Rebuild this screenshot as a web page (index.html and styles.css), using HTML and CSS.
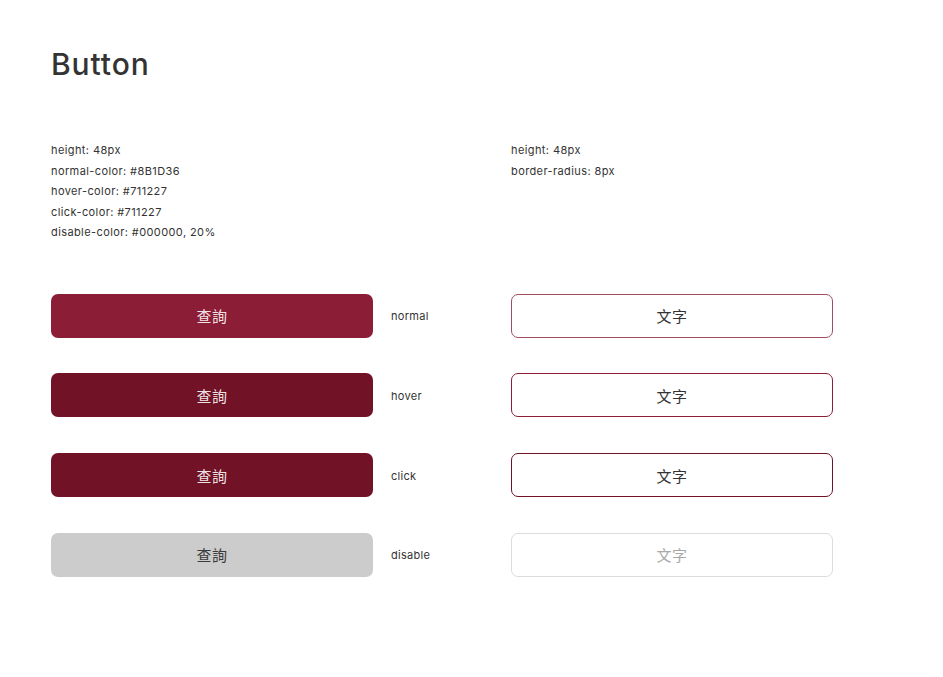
FILE: index.html
```html
<!DOCTYPE html>
<html lang="zh-Hant">
<head>
<meta charset="utf-8">
<title>Button</title>
<link rel="stylesheet" href="styles.css">
</head>
<body>
<main class="page">
  <h1 class="title">Button</h1>
  <div class="board">
    <ul class="spec spec-left">
      <li>height: 48px</li>
      <li>normal-color: #8B1D36</li>
      <li>hover-color: #711227</li>
      <li>click-color: #711227</li>
      <li>disable-color: #000000, 20%</li>
    </ul>
    <ul class="spec spec-right">
      <li>height: 48px</li>
      <li>border-radius: 8px</li>
    </ul>

    <button class="btn btn-fill is-normal">查詢</button>
    <span class="state">normal</span>
    <button class="btn btn-line is-normal">文字</button>

    <button class="btn btn-fill is-hover">查詢</button>
    <span class="state">hover</span>
    <button class="btn btn-line is-hover">文字</button>

    <button class="btn btn-fill is-click">查詢</button>
    <span class="state">click</span>
    <button class="btn btn-line is-click">文字</button>

    <button class="btn btn-fill is-disable">查詢</button>
    <span class="state">disable</span>
    <button class="btn btn-line is-disable">文字</button>
  </div>
</main>
</body>
</html>
```

FILE: styles.css
```css
html, body {
  margin: 0;
  padding: 0;
  background: #ffffff;
}

body {
  font-family: Inter, "Noto Sans CJK TC", sans-serif;
  color: #333333;
}

.page {
  padding: 44px 0 0 51px;
}

.title {
  margin: 0;
  font-size: 30px;
  line-height: 40px;
  font-weight: 500;
  color: #333333;
  letter-spacing: 0.9px;
}

.board {
  display: grid;
  grid-template-columns: 322px 138px 322px;
  grid-template-rows: 118px;
  grid-auto-rows: 44px;
  row-gap: 35.7px;
  margin-top: 56px;
}

.spec {
  list-style: none;
  margin: 0;
  padding: 0;
  font-size: 11px;
  line-height: 20.5px;
  letter-spacing: 0.4px;
  color: #333333;
  align-self: start;
  grid-row: 1;
}

.spec-left {
  grid-column: 1 / 3;
}

.spec-right {
  grid-column: 3;
}

.btn {
  margin: 0;
  padding: 0;
  height: 44px;
  border-radius: 7px;
  font-family: "Noto Sans CJK TC", sans-serif;
  font-size: 15px;
  letter-spacing: 0.5px;
  cursor: pointer;
}

.btn-fill {
  border: none;
  color: rgba(255, 255, 255, 0.9);
}

.btn-fill.is-normal { background: #8B1D36; }
.btn-fill.is-hover  { background: #711227; }
.btn-fill.is-click  { background: #711227; }
.btn-fill.is-disable {
  background: #cccccc;
  color: #3a3a3a;
}

.btn-line {
  background: #ffffff;
  color: #333333;
  border: 1px solid #a04c61;
}

.btn-line.is-hover { border-color: #8B1D36; }
.btn-line.is-click { border-color: #711227; }
.btn-line.is-disable {
  border-color: #dcdcdc;
  color: #a8a8a8;
}

.state {
  align-self: center;
  padding: 1px 0 0 18px;
  font-size: 11px;
  letter-spacing: 0.3px;
  color: #333333;
}
```
